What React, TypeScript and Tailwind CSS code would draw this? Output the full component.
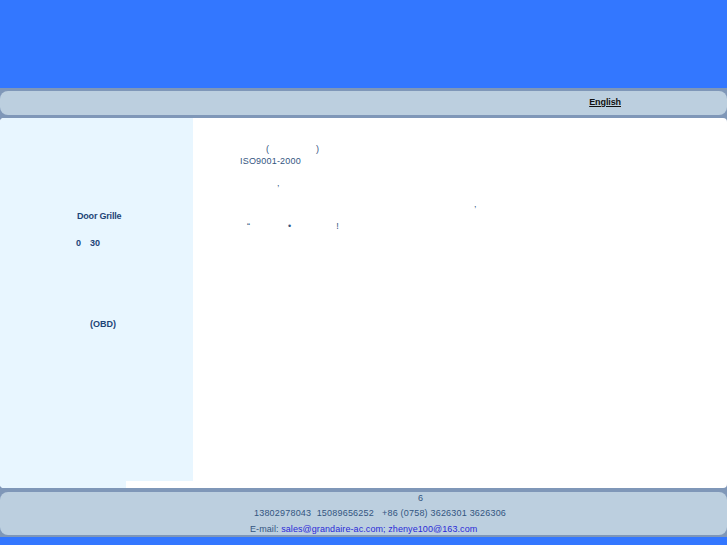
const sans = "font-['Liberation_Sans',Arial,sans-serif]"

const Band = ({ className, children }: { className: string; children?: React.ReactNode }) => (
  <div className={`bg-[#7f97b8] ${className}`}>
    <div className="h-full rounded-[8px] bg-[#bccfdf]">{children}</div>
  </div>
)

export default function App() {
  return (
    <div className={`flex h-[545px] w-[727px] flex-col overflow-hidden bg-[#3377ff] ${sans}`}>
      <div className="h-[88px] shrink-0" />

      <Band className="h-[30px] shrink-0 pt-[3px] pb-[3px]">
        <div className="flex h-full justify-end pt-[5px] pr-[106px]">
          <a className="text-[9px] leading-[12px] font-bold tracking-[-0.1px] text-[#111] underline">English</a>
        </div>
      </Band>

      <div className="flex h-[370px] shrink-0 bg-[#7f97b8]">
        <div className="flex h-full w-full overflow-hidden rounded-[4px] bg-white">
          <aside className="flex w-[193px] shrink-0 flex-col text-[9px] leading-[12px] font-bold text-[#1d4477]">
            <div className="h-[363px] bg-[#e8f6ff]">
              <p className="pt-[92px] pl-[77px] tracking-[-0.2px]">Door Grille</p>
              <p className="flex pt-[15px] pl-[76px]">
                <span>0</span>
                <span className="ml-[9px]">30</span>
              </p>
              <p className="pt-[69px] pl-[90px]">(OBD)</p>
            </div>
            <div className="h-[7px] w-[126px] bg-[#e8f6ff]" />
          </aside>
          <main className="flex-1 text-[9px] leading-[12px] text-[#33557f]">
            <p className="flex pt-[25px] pl-[73px]">
              <span>(</span>
              <span className="ml-[47px]">)</span>
            </p>
            <p className="pl-[47px] tracking-[0.2px]">ISO9001-2000</p>
            <p className="pt-[10px] pl-[84px]">,</p>
            <p className="pt-[9px] pl-[281px]">,</p>
            <p className="flex pt-[10px] pl-[54px]">
              <span>“</span>
              <span className="ml-[38px]">•</span>
              <span className="ml-[45px]">!</span>
            </p>
          </main>
        </div>
      </div>

      <Band className="h-[49px] shrink-0 pt-[4px] pb-[2px]">
        <div className="flex h-full flex-col text-[9px] text-[#33557f]">
          <p className="pl-[418px] leading-[12px]">6</p>
          <p className="pt-[3px] pl-[254px] leading-[12px] tracking-[0.2px] whitespace-pre">13802978043  15089656252   +86 (0758) 3626301 3626306</p>
          <p className="pt-[4px] pl-[250px] leading-[12px] tracking-[0.08px]">
            E-mail: <a className="text-[#2a2ad8]">sales@grandaire-ac.com; zhenye100@163.com</a>
          </p>
        </div>
      </Band>

      <div className="flex-1" />
    </div>
  )
}
